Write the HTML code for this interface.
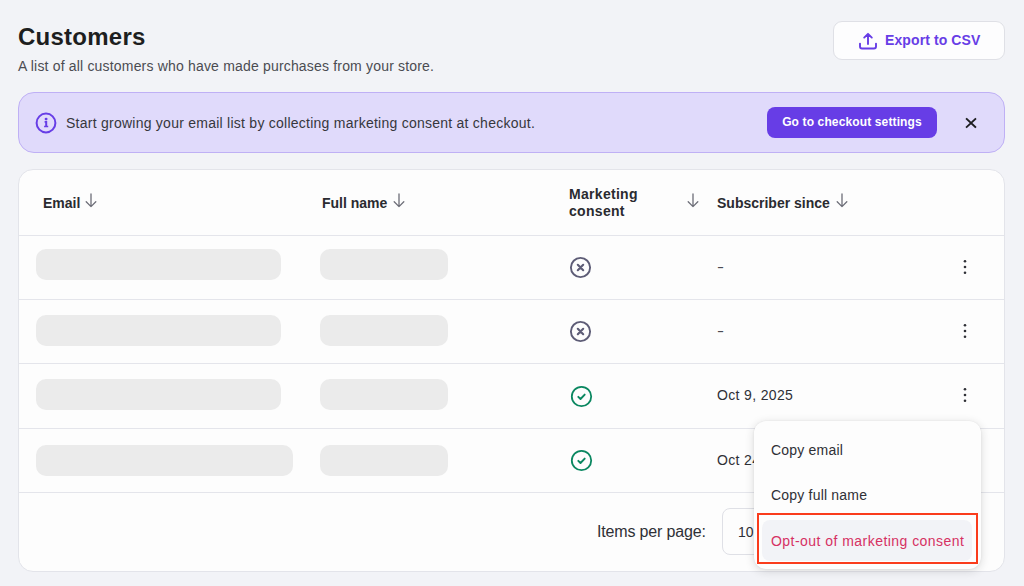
<!DOCTYPE html>
<html lang="en">
<head>
<meta charset="utf-8">
<title>Customers</title>
<style>
*{box-sizing:border-box;margin:0;padding:0}
html,body{width:1024px;height:586px;overflow:hidden}
body{background:#f2f3f7;font-family:"Liberation Sans",sans-serif;color:#1d1e20;position:relative}
.abs{position:absolute;white-space:nowrap}
h1{position:absolute;left:18px;top:22px;font-size:24px;line-height:30px;font-weight:700;color:#1d1e20;letter-spacing:.25px}
.sub{left:18px;top:57px;font-size:14px;line-height:18px;color:#4b4c52;letter-spacing:.18px}
.export{left:833px;top:21px;width:172px;height:39px;background:#fdfdfe;border:1px solid #dfe0e6;border-radius:9px}
.export span{letter-spacing:.1px;position:absolute;left:51px;top:9px;font-size:14px;line-height:18px;font-weight:700;color:#673de6}
.export svg{position:absolute;left:24px;top:9px}
.banner{left:18px;top:92px;width:987px;height:61px;background:#e0dafb;border:1px solid #bfb0f5;border-radius:16px}
.banner .txt{position:absolute;left:47px;top:21px;font-size:14px;line-height:18px;color:#36373d;letter-spacing:.25px}
.banner .btn{position:absolute;left:748px;top:14px;width:170px;height:31px;background:#673de6;border-radius:8px;color:#fff;font-size:12px;font-weight:700;line-height:31px;text-align:center;letter-spacing:.13px}
.card{left:18px;top:169px;width:987px;height:403px;background:#fdfdfd;border:1px solid #e3e4ea;border-radius:15px}
.hr{position:absolute;left:19px;width:985px;height:1px;background:#e4e5eb}
.th{font-size:14px;font-weight:700;line-height:17px;color:#2a2b30}
.pill{position:absolute;height:31px;border-radius:10px;background:#ebebeb}
.td{font-size:14px;line-height:18px;color:#2f3036;letter-spacing:.35px}
.menu{left:754px;top:421px;width:227px;height:148px;background:#fdfdfd;border-radius:12px;box-shadow:0 2px 10px rgba(29,30,32,.16),0 0 2px rgba(29,30,32,.08)}
.mi{position:absolute;left:17px;font-size:14px;line-height:18px;color:#2f3036;letter-spacing:.2px}
</style>
</head>
<body>
<h1>Customers</h1>
<div class="abs sub">A list of all customers who have made purchases from your store.</div>

<div class="abs export">
<svg width="20" height="20" viewBox="0 0 20 20" fill="none" stroke="#673de6" stroke-width="1.9" stroke-linecap="round" stroke-linejoin="round"><path d="M10 13V3M6.2 6.6L10 2.8l3.8 3.8M2 12.6v2.9a2 2 0 0 0 2 2h12a2 2 0 0 0 2-2v-2.9"/></svg>
<span>Export to CSV</span>
</div>

<div class="abs banner">
<svg style="position:absolute;left:16.4px;top:18.6px" width="22" height="22" viewBox="0 0 22 22" fill="none"><circle cx="11" cy="11" r="9.4" stroke="#673de6" stroke-width="2"/><circle cx="11.1" cy="7.1" r="1.45" fill="#673de6"/><path d="M9.6 9.1h2.6v4.6h1v1.6H9.1v-1.6h1.1v-3H9.6z" fill="#673de6"/></svg>
<div class="txt">Start growing your email list by collecting marketing consent at checkout.</div>
<div class="btn">Go to checkout settings</div>
<svg style="position:absolute;left:946px;top:24px" width="12" height="12" viewBox="0 0 12 12"><path d="M1.7 2l8.6 8M10.3 2l-8.6 8" stroke="#1d1e20" stroke-width="1.8" stroke-linecap="square"/></svg>
</div>

<div class="abs card"></div>
<div class="hr" style="top:235px"></div>
<div class="hr" style="top:299px"></div>
<div class="hr" style="top:363px"></div>
<div class="hr" style="top:428px"></div>
<div class="hr" style="top:492px"></div>

<div class="abs th" style="left:43px;top:195px">Email</div>
<div class="abs th" style="left:322px;top:195px">Full name</div>
<div class="abs th" style="left:569px;top:186px;white-space:normal;letter-spacing:.3px">Marketing<br>consent</div>
<div class="abs th" style="left:717px;top:195px">Subscriber since</div>

<svg class="abs" style="left:85px;top:193px" width="12" height="15" viewBox="0 0 12 15" fill="none" stroke="#6d6e78" stroke-width="1.3" stroke-linecap="round" stroke-linejoin="round"><path d="M6 1v12.5M1.2 8.8L6 13.6l4.8-4.8"/></svg>
<svg class="abs" style="left:393px;top:193px" width="12" height="15" viewBox="0 0 12 15" fill="none" stroke="#6d6e78" stroke-width="1.3" stroke-linecap="round" stroke-linejoin="round"><path d="M6 1v12.5M1.2 8.8L6 13.6l4.8-4.8"/></svg>
<svg class="abs" style="left:687px;top:193px" width="12" height="15" viewBox="0 0 12 15" fill="none" stroke="#6d6e78" stroke-width="1.3" stroke-linecap="round" stroke-linejoin="round"><path d="M6 1v12.5M1.2 8.8L6 13.6l4.8-4.8"/></svg>
<svg class="abs" style="left:836px;top:193px" width="12" height="15" viewBox="0 0 12 15" fill="none" stroke="#6d6e78" stroke-width="1.3" stroke-linecap="round" stroke-linejoin="round"><path d="M6 1v12.5M1.2 8.8L6 13.6l4.8-4.8"/></svg>

<div class="pill" style="left:36px;top:249px;width:245px"></div>
<div class="pill" style="left:320px;top:249px;width:128px"></div>
<div class="pill" style="left:36px;top:315px;width:245px"></div>
<div class="pill" style="left:320px;top:315px;width:128px"></div>
<div class="pill" style="left:36px;top:379px;width:245px"></div>
<div class="pill" style="left:320px;top:379px;width:128px"></div>
<div class="pill" style="left:36px;top:445px;width:257px"></div>
<div class="pill" style="left:320px;top:445px;width:128px"></div>

<svg class="abs" style="left:569px;top:256px" width="23" height="23" viewBox="0 0 23 23" fill="none" stroke="#5d5c76" stroke-width="1.9" stroke-linecap="round"><circle cx="11.5" cy="11.5" r="9.6"/><path stroke-width="2.1" d="M8.8 8.8l5.4 5.4M14.2 8.8l-5.4 5.4"/></svg>
<svg class="abs" style="left:569px;top:320px" width="23" height="23" viewBox="0 0 23 23" fill="none" stroke="#5d5c76" stroke-width="1.9" stroke-linecap="round"><circle cx="11.5" cy="11.5" r="9.6"/><path stroke-width="2.1" d="M8.8 8.8l5.4 5.4M14.2 8.8l-5.4 5.4"/></svg>
<svg class="abs" style="left:569.5px;top:385px" width="23" height="23" viewBox="0 0 23 23" fill="none" stroke="#0a8760" stroke-width="1.8" stroke-linecap="round" stroke-linejoin="round"><circle cx="11.5" cy="11.5" r="9.7"/><path stroke-width="1.9" d="M8.3 11.8l2.2 2.2 4.2-4.4"/></svg>
<svg class="abs" style="left:569.5px;top:449px" width="23" height="23" viewBox="0 0 23 23" fill="none" stroke="#0a8760" stroke-width="1.8" stroke-linecap="round" stroke-linejoin="round"><circle cx="11.5" cy="11.5" r="9.7"/><path stroke-width="1.9" d="M8.3 11.8l2.2 2.2 4.2-4.4"/></svg>

<div class="abs td" style="left:716.5px;top:258px;color:#4a4b52;transform:scaleX(1.5);transform-origin:0 0">-</div>
<div class="abs td" style="left:716.5px;top:322px;color:#4a4b52;transform:scaleX(1.5);transform-origin:0 0">-</div>
<div class="abs td" style="left:717px;top:386px">Oct 9, 2025</div>
<div class="abs td" style="left:717px;top:451px">Oct 24, 2025</div>

<svg class="abs" style="left:961.6px;top:259px" width="6" height="16" viewBox="0 0 6 16" fill="#2f3036"><circle cx="3" cy="2.2" r="1.3"/><circle cx="3" cy="8" r="1.3"/><circle cx="3" cy="13.8" r="1.3"/></svg>
<svg class="abs" style="left:961.6px;top:323px" width="6" height="16" viewBox="0 0 6 16" fill="#2f3036"><circle cx="3" cy="2.2" r="1.3"/><circle cx="3" cy="8" r="1.3"/><circle cx="3" cy="13.8" r="1.3"/></svg>
<svg class="abs" style="left:961.6px;top:387px" width="6" height="16" viewBox="0 0 6 16" fill="#2f3036"><circle cx="3" cy="2.2" r="1.3"/><circle cx="3" cy="8" r="1.3"/><circle cx="3" cy="13.8" r="1.3"/></svg>

<div class="abs" style="left:597px;top:522px;font-size:16px;line-height:20px;color:#2f3036;letter-spacing:-.16px">Items per page:</div>
<div class="abs" style="left:722px;top:508px;width:120px;height:47px;border:1px solid #dfe0e6;border-radius:8px;background:#fdfdfd"></div>
<div class="abs" style="left:738px;top:523px;font-size:14px;line-height:18px;color:#2f3036">10</div>

<div class="abs menu">
<div class="mi" style="top:20px">Copy email</div>
<div class="mi" style="top:65px">Copy full name</div>
<div style="position:absolute;left:8px;top:99px;width:210px;height:41px;border-radius:8px;background:#f2f3f7"></div>
<div class="mi" style="top:111px;color:#d63163;letter-spacing:.46px">Opt-out of marketing consent</div>
</div>
<div class="abs" style="left:757px;top:513px;width:221px;height:51px;border:2px solid #fa3c1c"></div>
</body>
</html>
